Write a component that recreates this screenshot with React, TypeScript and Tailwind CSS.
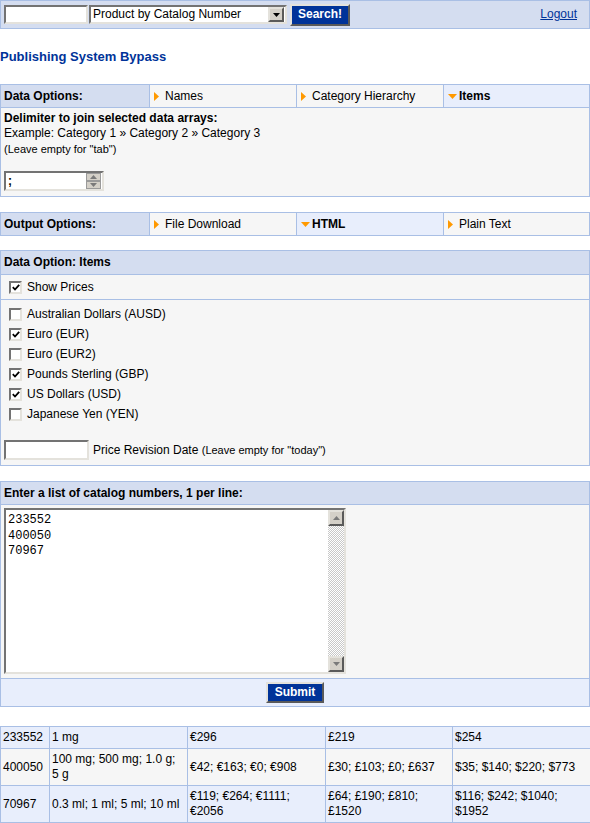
import clsx from "clsx";

const inset =
  "border-2 border-t-[#737373] border-l-[#737373] border-b-[#e4e2dc] border-r-[#e4e2dc] bg-white";
const outset =
  "border-2 border-t-[#e4e2dc] border-l-[#e4e2dc] border-b-[#5a5a5a] border-r-[#5a5a5a]";

const Arrow = ({ open }: { open?: boolean }) =>
  open ? (
    <svg width="9" height="5" viewBox="0 0 9 5" className="shrink-0">
      <path d="M0 0h9L4.5 5z" fill="#ff9900" />
    </svg>
  ) : (
    <svg width="5" height="9" viewBox="0 0 5 9" className="shrink-0">
      <path d="M0 0l5 4.5L0 9z" fill="#ff9900" />
    </svg>
  );

const Tri = ({ up }: { up?: boolean }) => (
  <svg width="7" height="4" viewBox="0 0 7 4">
    <path d={up ? "M0 4h7L3.5 0z" : "M0 0h7L3.5 4z"} fill="#7a7a7a" />
  </svg>
);

const Check = ({ checked }: { checked?: boolean }) => (
  <span className={clsx("w-[13px] h-[13px] flex items-center justify-center shrink-0", inset)}>
    {checked && (
      <svg width="8" height="7" viewBox="0 0 8 7">
        <path d="M0.8 3.2L3 5.5L7.2 0.8" stroke="#000" strokeWidth="1.8" fill="none" />
      </svg>
    )}
  </span>
);

interface OptionRowProps {
  label: string;
  items: string[];
  selected: number;
}

const OptionRow = ({ label, items, selected }: OptionRowProps) => (
  <div className="grid grid-cols-[148px_147px_147px_1fr] h-[22px]">
    <div className="bg-[#d4ddf0] px-[3px] font-bold flex items-center">{label}</div>
    {items.map((it, i) => (
      <div
        key={it}
        className={clsx(
          "border-l border-[#a9bfe5] flex items-center pl-[4px]",
          i === selected ? "bg-[#e8eefc] font-bold gap-[2px]" : "bg-[#f6f6f6] gap-[6px]"
        )}
      >
        <Arrow open={i === selected} />
        <span>{it}</span>
      </div>
    ))}
  </div>
);

const currencies = [
  { name: "Australian Dollars (AUSD)", on: false },
  { name: "Euro (EUR)", on: true },
  { name: "Euro (EUR2)", on: false },
  { name: "Pounds Sterling (GBP)", on: true },
  { name: "US Dollars (USD)", on: true },
  { name: "Japanese Yen (YEN)", on: false },
];

const rows = [
  ["233552", "1 mg", "€296", "£219", "$254"],
  ["400050", "100 mg; 500 mg; 1.0 g; 5 g", "€42; €163; €0; €908", "£30; £103; £0; £637", "$35; $140; $220; $773"],
  ["70967", "0.3 ml; 1 ml; 5 ml; 10 ml", "€119; €264; €1111; €2056", "£64; £190; £810; £1520", "$116; $242; $1040; $1952"],
];

const App = () => {
  return (
    <div className="w-[590px] min-h-[823px] bg-white text-black text-[12px] leading-[15px] font-['Liberation_Sans',Arial,sans-serif]">
      <div className="h-[29px] bg-[#d4ddf0] border border-[#a9bfe5] flex items-center pl-[3px] pr-[12px]">
        <div className={clsx("w-[84px] h-[19px]", inset)} />
        <div className={clsx("ml-[1px] w-[198px] h-[19px] flex items-center pl-[2px] pr-[1px]", inset)}>
          <span className="flex-1">Product by Catalog Number</span>
          <span className={clsx("w-[16px] h-[15px] bg-[#d4d0c8] flex items-center justify-center", outset)}>
            <svg width="7" height="4" viewBox="0 0 7 4">
              <path d="M0 0h7L3.5 4z" fill="#000" />
            </svg>
          </span>
        </div>
        <button className={clsx("ml-[3px] w-[60px] h-[22px] bg-[#003399] text-white font-bold", outset)}>
          Search!
        </button>
        <a href="#" className="ml-auto text-[#003399] underline">
          Logout
        </a>
      </div>

      <div className="h-[55px] flex items-center">
        <h1 className="text-[13px] font-bold text-[#003399]">Publishing System Bypass</h1>
      </div>

      <div className="border border-[#a9bfe5]">
        <OptionRow label="Data Options:" items={["Names", "Category Hierarchy", "Items"]} selected={2} />
        <div className="border-t border-[#a9bfe5] bg-[#f6f6f6] px-[3px] pt-[3px] pb-[5px]">
          <p className="font-bold">Delimiter to join selected data arrays:</p>
          <p>Example: Category 1 » Category 2 » Category 3</p>
          <p className="text-[11px] leading-[14px] mt-[1px]">(Leave empty for "tab")</p>
          <div className={clsx("mt-[15px] w-[100px] h-[20px] flex items-center pl-[2px] pr-[1px]", inset)}>
            <span className="flex-1 font-bold">;</span>
            <div className="flex flex-col">
              <span className="w-[15px] h-[8px] bg-[#d4d0c8] border flex items-center justify-center border-[#9a9a9a]">
                <Tri up />
              </span>
              <span className="w-[15px] h-[8px] bg-[#d4d0c8] border flex items-center justify-center border-[#9a9a9a]">
                <Tri />
              </span>
            </div>
          </div>
        </div>
      </div>

      <div className="mt-[15px] border border-[#a9bfe5]">
        <OptionRow label="Output Options:" items={["File Download", "HTML", "Plain Text"]} selected={1} />
      </div>

      <div className="mt-[14px] border border-[#a9bfe5]">
        <div className="h-[23px] bg-[#d4ddf0] px-[3px] font-bold flex items-center">Data Option: Items</div>
        <div className="h-[25px] border-t border-[#a9bfe5] bg-[#f6f6f6] flex items-center pl-[8px] gap-[5px]">
          <Check checked />
          <span>Show Prices</span>
        </div>
        <div className="border-t border-[#a9bfe5] bg-[#f6f6f6] pt-[4px] pb-[5px] pl-[3px]">
          {currencies.map((c) => (
            <div key={c.name} className="h-[20px] flex items-center pl-[5px] gap-[5px]">
              <Check checked={c.on} />
              <span>{c.name}</span>
            </div>
          ))}
          <div className="mt-[16px] h-[20px] flex items-center gap-[4px]">
            <div className={clsx("w-[85px] h-[20px]", inset)} />
            <span>
              Price Revision Date <span className="text-[11px]">(Leave empty for "today")</span>
            </span>
          </div>
        </div>
      </div>

      <div className="mt-[15px] border border-[#a9bfe5]">
        <div className="h-[22px] bg-[#d4ddf0] px-[3px] font-bold flex items-center">
          Enter a list of catalog numbers, 1 per line:
        </div>
        <div className="border-t border-[#a9bfe5] bg-[#f6f6f6] pl-[3px] pt-[3px] pb-[4px]">
          <div className={clsx("w-[342px] h-[166px] flex", inset)}>
            <div className="flex-1 pl-[2px] pt-[3px] font-['Liberation_Mono','Courier_New',monospace] text-[12px] leading-[15.5px] whitespace-pre">
              {"233552\n400050\n70967"}
            </div>
            <div className="w-[16px] flex flex-col bg-[repeating-conic-gradient(#c8c8c8_0_25%,#ffffff_0_50%)] bg-[length:2px_2px]">
              <span className={clsx("h-[16px] bg-[#d4d0c8] flex items-center justify-center", outset)}>
                <Tri up />
              </span>
              <span className="flex-1" />
              <span className={clsx("h-[16px] bg-[#d4d0c8] flex items-center justify-center", outset)}>
                <Tri />
              </span>
            </div>
          </div>
        </div>
        <div className="h-[28px] border-t border-[#a9bfe5] bg-[#e8eefc] flex items-center justify-center">
          <button className={clsx("w-[58px] h-[21px] bg-[#003399] text-white font-bold", outset)}>Submit</button>
        </div>
      </div>

      <table className="mt-[19px] w-[590px] table-fixed border-collapse">
        <colgroup>
          <col className="w-[49px]" />
          <col className="w-[138px]" />
          <col className="w-[138px]" />
          <col className="w-[127px]" />
          <col className="w-[138px]" />
        </colgroup>
        <tbody>
          {rows.map((r, i) => (
            <tr key={r[0]} className={i % 2 === 1 ? "bg-[#f6f6f6]" : "bg-[#e8eefc]"}>
              {r.map((c, j) => (
                <td key={j} className="border border-[#a9bfe5] px-[2px] py-[3px] align-middle">
                  {c}
                </td>
              ))}
            </tr>
          ))}
        </tbody>
      </table>
    </div>
  );
};

export default App;
